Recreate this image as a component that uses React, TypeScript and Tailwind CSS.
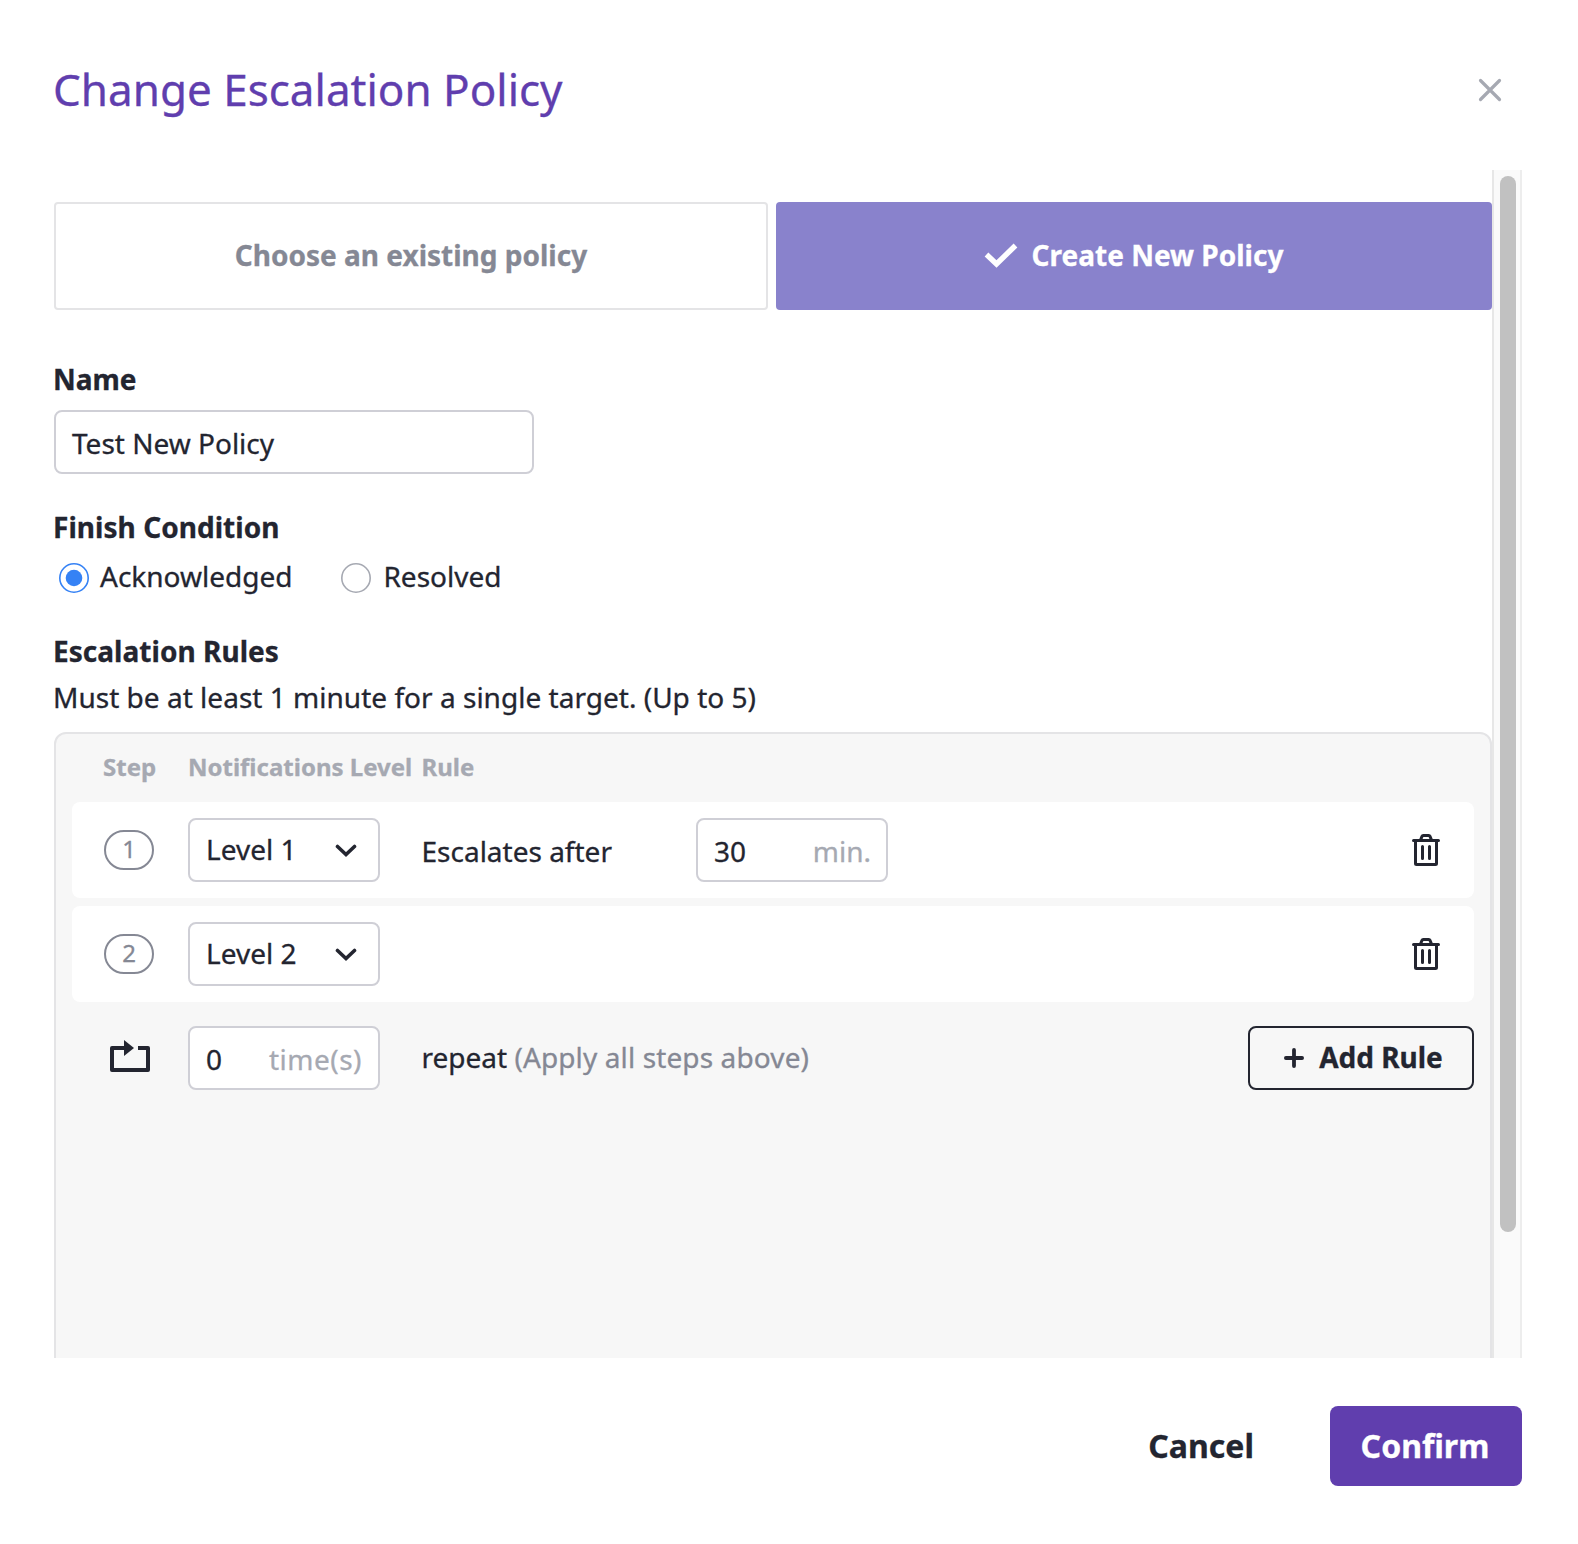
import React from "react";

function CloseIcon() {
  return (
    <svg width="24" height="24" viewBox="0 0 24 24" fill="none" stroke="#a6a9b2" strokeWidth="3.2" strokeLinecap="round">
      <path d="M2.5 2.5 L21.5 21.5 M21.5 2.5 L2.5 21.5" />
    </svg>
  );
}

function CheckIcon() {
  return (
    <svg className="mt-0.5" width="34" height="26" viewBox="0 0 34 26" fill="none" stroke="#ffffff" strokeWidth="5.4">
      <path d="M2.5 11.5 L12.5 21 L31.5 2.5" />
    </svg>
  );
}

function ChevronIcon() {
  return (
    <svg className="mt-px" width="22" height="14" viewBox="0 0 22 14" fill="none" stroke="#232530" strokeWidth="3.6" strokeLinecap="round">
      <path d="M2.5 2.5 L11 10.5 L19.5 2.5" />
    </svg>
  );
}

function TrashIcon() {
  return (
    <svg width="28" height="32" viewBox="0 0 28 32" fill="none" stroke="#232530" strokeWidth="3">
      <path d="M1.5 6.5 H26.5" strokeLinecap="round" />
      <path d="M8.5 6 L10 2.4 Q10.3 1.5 11.3 1.5 H16.7 Q17.7 1.5 18 2.4 L19.5 6" />
      <path d="M3.5 6.5 V29.5 Q3.5 30.5 4.5 30.5 H23.5 Q24.5 30.5 24.5 29.5 V6.5" />
      <path d="M10.5 12.5 V24.5 M17.5 12.5 V24.5" strokeLinecap="round" />
    </svg>
  );
}

function RepeatIcon() {
  return (
    <svg width="40" height="32" viewBox="0 0 40 32">
      <path d="M15 8 H2 V30 H38 V8 H28" fill="none" stroke="#232530" strokeWidth="4" strokeLinejoin="round" />
      <path d="M14 0 L24 8 L14 16 Z" fill="#232530" />
    </svg>
  );
}

function PlusIcon() {
  return (
    <svg width="20" height="20" viewBox="0 0 20 20" fill="none" stroke="#232530" strokeWidth="3.8" strokeLinecap="round">
      <path d="M10 1.9 V18.1 M1.9 10 H18.1" />
    </svg>
  );
}

function Radio({ label, checked }: { label: string; checked?: boolean }) {
  return (
    <label className="flex items-center">
      <svg className="mt-[3px]" width="30" height="30" viewBox="0 0 30 30" fill="none">
        <circle cx="15" cy="15" r="14.2" stroke={checked ? "#3582f5" : "#a6a9b2"} strokeWidth="1.6" />
        {checked && <circle cx="15" cy="15" r="8.3" fill="#3582f5" />}
      </svg>
      <span className={checked ? "ml-[11px]" : "ml-3"}>{label}</span>
    </label>
  );
}

function NumberField({ value, unit }: { value: string; unit: React.ReactNode }) {
  return (
    <div className="flex h-16 w-48 items-center justify-between rounded-lg border-2 border-[#cfcfd6] bg-white pl-4 pr-[15px] pt-0.5">
      <span>{value}</span>
      <span className="text-[#a6a9b2]">{unit}</span>
    </div>
  );
}

function RuleRow({ step, level, children }: { step: number; level: string; children?: React.ReactNode }) {
  return (
    <div className="flex h-24 items-center rounded-lg bg-white pl-8 pr-[34px]">
      <span className="flex h-10 w-[50px] items-center justify-center rounded-full border-2 border-[#858894] text-2xl text-[#858894]">
        <span className="-mt-0.5">{step}</span>
      </span>
      <button className="ml-[34px] flex h-16 w-48 items-center justify-between rounded-lg border-2 border-[#cfcfd6] pl-4 pr-[21px]">
        <span className="-mt-[3px]">{level}</span>
        <ChevronIcon />
      </button>
      <div className="ml-[41.5px] flex flex-1 items-center">{children}</div>
      <TrashIcon />
    </div>
  );
}

export default function App() {
  return (
    <div className="flex h-[1544px] w-[1578px] flex-col bg-white pl-[54px] pr-14 font-['Noto_Sans',sans-serif] text-[28px] leading-10 text-[#232530] [-webkit-text-stroke:0.3px]">
      <header className="flex h-[170px] items-center justify-between pr-5">
        <h1 className="-ml-px mt-2 text-[44px] leading-[60px] text-[#603eae]">Change Escalation Policy</h1>
        <button className="mt-[10px]" aria-label="Close">
          <CloseIcon />
        </button>
      </header>

      <div className="-ml-px flex h-[1188px] overflow-hidden pl-px">
        <main className="w-[1438px] shrink-0 pt-8">
          <div className="flex h-[108px] gap-2 font-bold">
            <button className="w-[714px] rounded border-2 border-[#e4e4e6] pb-0.5 text-[#858894]">Choose an existing policy</button>
            <button className="flex w-[716px] items-center justify-center gap-[14px] rounded bg-[#8982cc] pb-0.5 pr-px text-white">
              <CheckIcon />
              <span>Create New Policy</span>
            </button>
          </div>

          <div className="-ml-px mt-[49px] font-bold">Name</div>
          <div className="mt-[11px] flex h-16 w-[480px] items-center rounded-lg border-2 border-[#cfcfd6] px-4 pt-0.5">Test New Policy</div>

          <div className="-ml-px mt-[33px] font-bold tracking-[0.04px]">Finish Condition</div>
          <div className="mt-[9px] flex gap-[49px] pl-[5px]">
            <Radio label="Acknowledged" checked />
            <Radio label="Resolved" />
          </div>

          <div className="-ml-px mt-[35px] font-bold tracking-[0.04px]">Escalation Rules</div>
          <div className="-ml-px mt-1.5 tracking-[0.02px]">Must be at least 1 minute for a single target. (Up to 5)</div>

          <section className="mt-[15px] h-[700px] rounded-xl border-2 border-[#e4e4e6] bg-[#f7f7f7] px-4">
            <div className="flex h-[68px] items-center pb-0.5 pl-[31px] text-2xl font-bold text-[#a6a9b2]">
              <span className="w-[85px]">Step</span>
              <span className="w-[233.5px] whitespace-nowrap">Notifications Level</span>
              <span>Rule</span>
            </div>
            <div className="flex flex-col gap-2">
              <RuleRow step={1} level="Level 1">
                <span className="w-[274.5px] pt-0.5">Escalates after</span>
                <NumberField value="30" unit="min." />
              </RuleRow>
              <RuleRow step={2} level="Level 2" />
            </div>
            <div className="mt-6 flex h-16 items-center pl-[38px]">
              <span className="-mt-1">
                <RepeatIcon />
              </span>
              <div className="ml-[38px]">
                <NumberField value="0" unit={<span className="mr-px tracking-[0.5px]">time(s)</span>} />
              </div>
              <p className="-mt-0.5 ml-[41.5px] flex-1">
                repeat <span className="tracking-[0.12px] text-[#858894]">(Apply all steps above)</span>
              </p>
              <button className="flex h-16 w-[226px] items-center justify-center gap-[15px] rounded-lg border-2 border-[#232530] pl-[5px] font-bold">
                <PlusIcon />
                <span className="-mt-0.5">Add Rule</span>
              </button>
            </div>
          </section>
        </main>

        <div className="w-[30px] shrink-0 border-x-2 border-l-[#e7e7e7] border-r-[#ededed] bg-[#fafafa] pl-1.5 pt-1.5">
          <div className="h-[1056px] w-4 rounded-full bg-[#c1c1c1]" />
        </div>
      </div>

      <footer className="mt-12 flex h-20 items-center justify-end text-[32px] font-bold">
        <button className="mr-[76px]">Cancel</button>
        <button className="h-20 w-48 rounded-lg bg-[#603eae] pr-0.5 text-white">Confirm</button>
      </footer>
    </div>
  );
}
